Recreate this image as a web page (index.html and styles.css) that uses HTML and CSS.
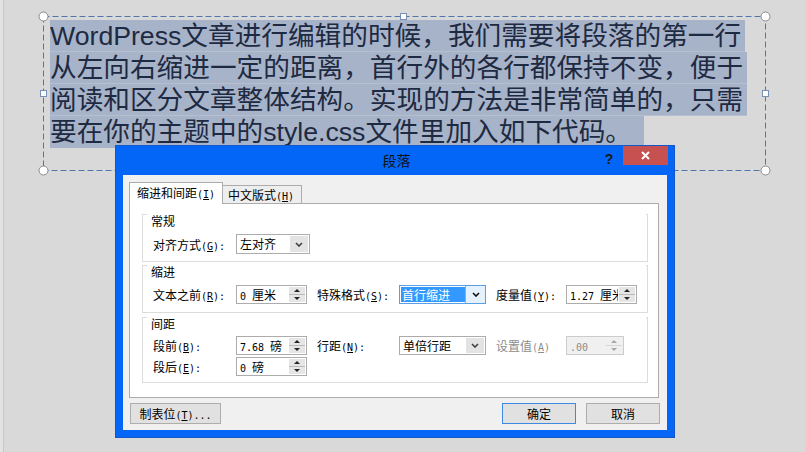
FILE: index.html
```html
<!DOCTYPE html>
<html lang="zh-CN">
<head>
    <meta charset="UTF-8">
    <title>段落</title>
    <link rel="stylesheet" href="styles.css">
</head>
<body>
    <div class="stage">
        <div class="slide-text">
            <div class="line">WordPress文章进行编辑的时候，我们需要将段落的第一行</div>
            <div class="line">从左向右缩进一定的距离，首行外的各行都保持不变，便于</div>
            <div class="line">阅读和区分文章整体结构。实现的方法是非常简单的，只需</div>
            <div class="line last">要在你的主题中的style.css文件里加入如下代码。</div>
        </div>

        <!-- selection frame of the text box -->
        <svg class="frame" width="805" height="452" viewBox="0 0 805 452">
            <rect x="43.5" y="16.5" width="722" height="154" fill="none" stroke="#5176ab" stroke-dasharray="6 3"/>
            <circle cx="43.5" cy="16.5" r="4.5" fill="#fff" stroke="#8a8a8a"/>
            <circle cx="765.5" cy="16.5" r="4.5" fill="#fff" stroke="#8a8a8a"/>
            <circle cx="43.5" cy="170.5" r="4.5" fill="#fff" stroke="#8a8a8a"/>
            <circle cx="765.5" cy="170.5" r="4.5" fill="#fff" stroke="#8a8a8a"/>
            <rect x="400.5" y="13.5" width="6" height="6" fill="#fff" stroke="#7890b6"/>
            <rect x="40.5" y="90.5" width="6" height="6" fill="#fff" stroke="#7890b6"/>
            <rect x="762.5" y="90.5" width="6" height="6" fill="#fff" stroke="#7890b6"/>
        </svg>

        <div class="dialog">
            <div class="titlebar">
                <div class="title">段落</div>
                <div class="help">?</div>
                <div class="close">
                    <svg width="9" height="9" viewBox="0 0 9 9"><path d="M1 1 L8 8 M8 1 L1 8" stroke="#fff" stroke-width="2"/></svg>
                </div>
            </div>

            <div class="dlg-body">
                <div class="tabs">
                    <div class="tab active">缩进和间距<span class="a">(<u>I</u>)</span></div>
                    <div class="tab">中文版式<span class="a">(<u>H</u>)</span></div>
                </div>

                <div class="panel">
                    <div class="group g1">
                        <div class="legend">常规</div>
                        <div class="row tall">
                            <span class="lbl">对齐方式<span class="a">(<u>G</u>):</span></span>
                            <div class="combo w74">
                                <span class="val">左对齐</span>
                                <span class="drop"><svg width="8" height="5" viewBox="0 0 8 5"><path d="M1 1 L4 4 L7 1" fill="none" stroke="#404040" stroke-width="1.6"/></svg></span>
                            </div>
                        </div>
                    </div>

                    <div class="group g2">
                        <div class="legend">缩进</div>
                        <div class="row">
                            <span class="lbl">文本之前<span class="a">(<u>R</u>):</span></span>
                            <div class="spin w71">
                                <span class="val"><span class="a">0 </span>厘米</span>
                                <span class="arrows"><span class="up"></span><span class="down"></span></span>
                            </div>
                            <span class="lbl mid">特殊格式<span class="a">(<u>S</u>):</span></span>
                            <div class="combo w87 focus">
                                <span class="val"><span class="sel">首行缩进</span></span>
                                <span class="drop"><svg width="8" height="5" viewBox="0 0 8 5"><path d="M1 1 L4 4 L7 1" fill="none" stroke="#111" stroke-width="1.6"/></svg></span>
                            </div>
                            <span class="lbl right">度量值<span class="a">(<u>Y</u>):</span></span>
                            <div class="spin w71">
                                <span class="val"><span class="a">1.27 </span>厘米</span>
                                <span class="arrows"><span class="up"></span><span class="down"></span></span>
                            </div>
                        </div>
                    </div>

                    <div class="group g3">
                        <div class="legend">间距</div>
                        <div class="row">
                            <span class="lbl">段前<span class="a">(<u>B</u>):</span></span>
                            <div class="spin w71">
                                <span class="val"><span class="a">7.68 </span>磅</span>
                                <span class="arrows"><span class="up"></span><span class="down"></span></span>
                            </div>
                            <span class="lbl mid">行距<span class="a">(<u>N</u>):</span></span>
                            <div class="combo w87">
                                <span class="val">单倍行距</span>
                                <span class="drop"><svg width="8" height="5" viewBox="0 0 8 5"><path d="M1 1 L4 4 L7 1" fill="none" stroke="#404040" stroke-width="1.6"/></svg></span>
                            </div>
                            <span class="lbl right disabled">设置值<span class="a">(<u>A</u>)</span></span>
                            <div class="spin w58 disabled">
                                <span class="val"><span class="a">.00</span></span>
                                <span class="arrows"><span class="up"></span><span class="down"></span></span>
                            </div>
                        </div>
                        <div class="row second">
                            <span class="lbl">段后<span class="a">(<u>E</u>):</span></span>
                            <div class="spin w71">
                                <span class="val"><span class="a">0 </span>磅</span>
                                <span class="arrows"><span class="up"></span><span class="down"></span></span>
                            </div>
                        </div>
                    </div>
                </div>

                <div class="buttons">
                    <div class="btn tabs-btn">制表位<span class="a">(<u>T</u>)...</span></div>
                    <div class="spacer"></div>
                    <div class="btn default">确定</div>
                    <div class="btn">取消</div>
                </div>
            </div>
        </div>
    </div>
</body>
</html>
```

FILE: styles.css
```css
body {
    margin: 0;
    background-color: #d9d9d9;
}

.stage {
    position: relative;
    width: 805px;
    height: 452px;
    overflow: hidden;
    background: linear-gradient(to right, #e2e2e2 0, #e2e2e2 3px, #c8c8c8 3px, #c8c8c8 4px, #d9d9d9 4px);
}

/* slide text, selected */
.slide-text {
    padding: 20px 0 0 50px;
    font-family: "Liberation Sans", "Noto Sans CJK SC", sans-serif;
    font-size: 26.67px;
    color: #1e2a42;
}

.line {
    width: fit-content;
    height: 32px;
    line-height: 32px;
    padding-right: 4px;
    white-space: nowrap;
    background-color: #a7b3c8;
    box-sizing: border-box;
    border-bottom: 1px solid #b6bfd0;
}

.line.last {
    padding-right: 12px;
    border-bottom: none;
}

.frame {
    position: absolute;
    top: 0;
    left: 0;
    pointer-events: none;
}

/* dialog window */
.dialog {
    position: absolute;
    left: 115px;
    top: 145px;
    width: 560px;
    height: 293px;
    box-sizing: border-box;
    background-color: #0366f6;
    border: 1px solid #1457c8;
    padding: 0 7px 7px 7px;
    font-family: "Noto Sans CJK SC", sans-serif;
    font-size: 12px;
    color: #000;
}

/* half-width latin parts, like the 6px cells of the system font */
.a {
    font-family: "DejaVu Sans Mono", monospace;
    font-size: 10px;
}

.titlebar {
    display: flex;
    align-items: flex-start;
    height: 29px;
    padding-left: 68px;
}

.title {
    flex: 1;
    text-align: center;
    line-height: 29px;
    font-size: 14px;
    color: #111;
}

.help {
    width: 14px;
    margin-top: 5px;
    margin-right: 7px;
    line-height: 16px;
    text-align: center;
    font-family: "Liberation Sans", sans-serif;
    font-weight: bold;
    font-size: 14px;
    color: #1a1a1a;
}

.close {
    display: flex;
    align-items: center;
    justify-content: center;
    width: 45px;
    height: 19px;
    margin-right: -1px;
    background-color: #c75050;
}

.dlg-body {
    height: 255px;
    box-sizing: border-box;
    background-color: #f0f0f0;
    padding: 7px 8px 6px 6px;
}

/* tabs */
.tabs {
    display: flex;
    align-items: flex-end;
    height: 21px;
}

.tab {
    box-sizing: border-box;
    border: 1px solid #acacac;
    border-bottom: none;
    white-space: nowrap;
}

.tab.active {
    position: relative;
    z-index: 1;
    width: 94px;
    height: 22px;
    margin-bottom: -1px;
    padding-left: 7px;
    line-height: 20px;
    background-color: #fff;
}

.tab:not(.active) {
    width: 79px;
    height: 18px;
    padding-left: 5px;
    border-left: none;
    line-height: 17px;
    background-color: #eeeeee;
}

.panel {
    height: 195px;
    box-sizing: border-box;
    border: 1px solid #acacac;
    background-color: #fff;
    padding: 17px 10px 0 12px;
}

/* group boxes */
.group {
    position: relative;
    border: 1px solid #dcdcdc;
    border-top: none;
}

.group::before,
.group::after {
    content: "";
    position: absolute;
    top: 0;
    width: 5px;
    height: 1px;
    background-color: #dcdcdc;
}

.group::before {
    left: -1px;
}

.group::after {
    right: -1px;
    width: 2px;
}

.g1 {
    padding-bottom: 7px;
}

.g2 {
    margin-top: 10px;
    padding-bottom: 8px;
}

.g3 {
    margin-top: 11px;
    padding-bottom: 6px;
}

.legend {
    height: 14px;
    margin-top: -7px;
    padding-left: 8px;
    line-height: 14px;
}

.row {
    display: flex;
    align-items: center;
    height: 19px;
    margin-top: 6px;
    padding-left: 10px;
    white-space: nowrap;
}

.row.tall {
    height: 20px;
}

.g3 .row {
    margin-top: 5px;
}

.g3 .row.second {
    margin-top: 2px;
}

.lbl {
    width: 83px;
    flex-shrink: 0;
}

.lbl.mid {
    width: 82px;
    margin-left: 10px;
}

.lbl.right {
    width: 70px;
    margin-left: 10px;
}

.lbl.disabled {
    color: #8d8d8d;
}

/* combo boxes and spinners */
.combo,
.spin {
    display: flex;
    height: 100%;
    box-sizing: border-box;
    border: 1px solid #acacac;
    background-color: #fff;
    flex-shrink: 0;
}

.w74 { width: 74px; }
.w71 { width: 71px; }
.w87 { width: 87px; }
.w58 { width: 58px; }

.val {
    flex: 1;
    overflow: hidden;
    padding-left: 3px;
    line-height: 17px;
    white-space: nowrap;
}

.tall .val {
    line-height: 18px;
}

.drop {
    display: flex;
    align-items: center;
    justify-content: center;
    width: 18px;
    margin: 1px;
    background-color: #e3e3e3;
}

.combo.focus {
    border-color: #5a9fe6;
}

.combo.focus .val {
    padding-left: 1px;
}

.combo.focus .sel {
    display: inline-block;
    width: 63px;
    padding-left: 1px;
    line-height: 15px;
    margin-top: 1px;
    color: #fff;
    background-color: #3399ff;
}

.combo.focus .drop {
    margin: 0;
    width: 19px;
    border-left: 1px solid #7eb4ea;
    background-color: #e5f1fb;
}

.arrows {
    display: flex;
    flex-direction: column;
    width: 16px;
    margin: 1px;
    background-color: #e5e5e5;
}

.arrows span {
    flex: 1;
    display: flex;
    align-items: center;
    justify-content: center;
}

.arrows .up {
    border-bottom: 1px solid #b9b9b9;
}

.arrows .up::after,
.arrows .down::after {
    content: "";
    border: 3px solid transparent;
}

.arrows .up::after {
    border-bottom: 3px solid #222;
    margin-top: -3px;
}

.arrows .down::after {
    border-top: 3px solid #222;
    margin-bottom: -3px;
}

.spin.disabled {
    border-color: #cccccc;
    background-color: #f0f0f0;
    color: #8d8d8d;
}

.spin.disabled .arrows {
    background-color: #f0f0f0;
}

.spin.disabled .arrows .up {
    border-bottom-color: #d6d6d6;
}

.spin.disabled .arrows .up::after {
    border-bottom-color: #a6a6a6;
}

.spin.disabled .arrows .down::after {
    border-top-color: #a6a6a6;
}

/* bottom buttons */
.buttons {
    display: flex;
    height: 21px;
    margin-top: 5px;
}

.btn {
    box-sizing: border-box;
    width: 74px;
    height: 21px;
    border: 1px solid #adadad;
    background-color: #e1e1e1;
    line-height: 19px;
    text-align: center;
}

.btn.tabs-btn {
    width: 91px;
    margin-left: 1px;
}

.spacer {
    flex: 1;
}

.btn.default {
    border-color: #3c8be0;
    margin-right: 10px;
}

.btn:last-child {
    margin-right: -1px;
}
```
